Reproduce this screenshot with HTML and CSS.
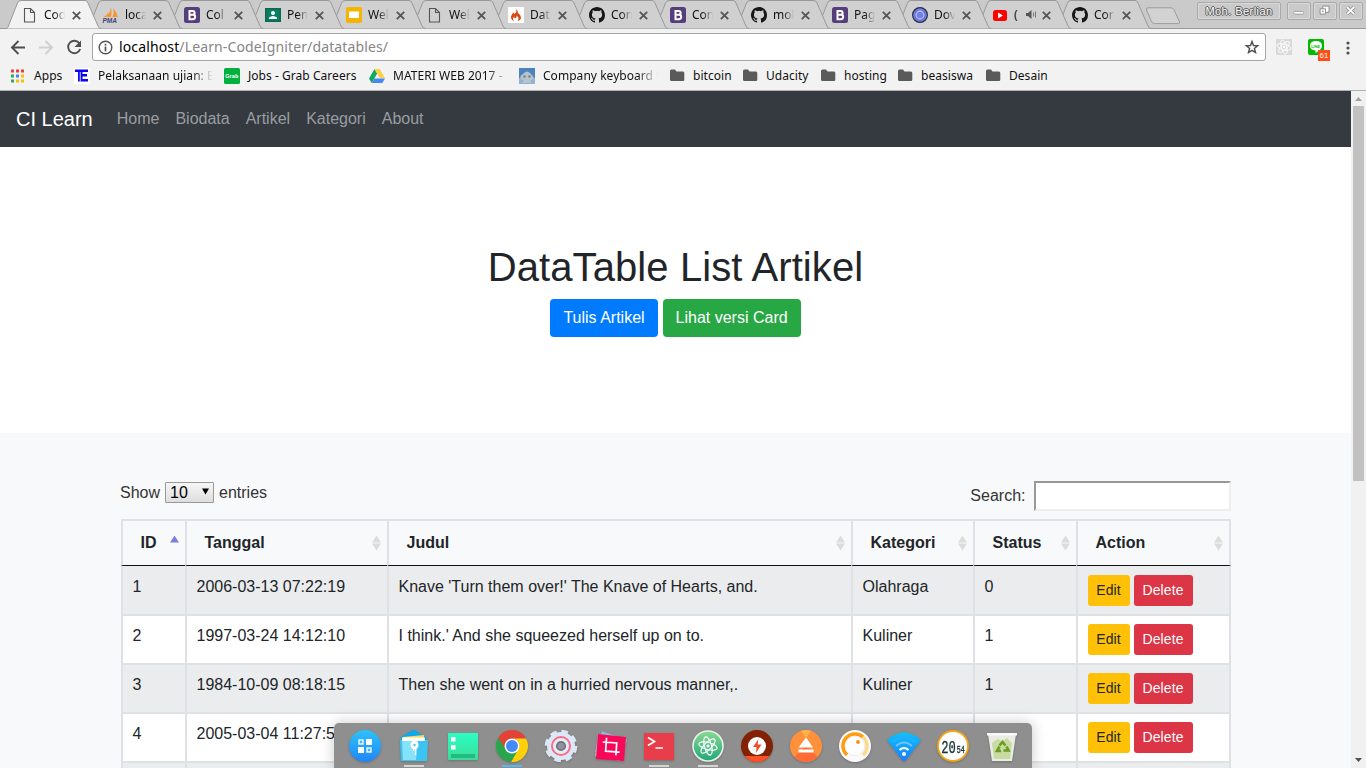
FILE: index.html
```html
<!DOCTYPE html>
<html lang="id">
<head>
<meta charset="utf-8">
<title>CodeIgniter DataTables</title>
<link rel="stylesheet" href="styles.css">
</head>
<body>
<svg class="defs" width="0" height="0">
  <symbol id="shape" viewBox="0 0 97 29"><path d="M0 29C2 29 2.500 28 3 27L12.500 3Q13.500.5 16 .5H80Q82 .5 83 3L93 26Q94 28.500 96 28.500V29Z"/></symbol>
  <symbol id="doc" viewBox="0 0 16 16"><path d="M2.500 1.500h6l4 4v9.500h-10zM8.500 1.500v4h4" fill="none" stroke="#555" stroke-width="1.100"/></symbol>
  <symbol id="boot" viewBox="0 0 16 16"><rect width="16" height="16" rx="2.500" fill="#563d7c"/><path d="M5.500 3.900h3.200a1.900 1.900 0 0 1 0 3.900H5.500zM5.500 7.800h3.500a2.200 2.200 0 0 1 0 4.400H5.500z" fill="none" stroke="#fff" stroke-width="2"/></symbol>
  <symbol id="git" viewBox="0 0 16 16"><path fill="#161616" d="M8 0C3.580 0 0 3.580 0 8c0 3.540 2.290 6.530 5.470 7.590.4.070.55-.17.55-.38 0-.19-.01-.82-.01-1.490-2.010.37-2.530-.49-2.690-.94-.09-.23-.48-.94-.82-1.130-.28-.15-.68-.52-.01-.53.63-.01 1.080.58 1.230.82.72 1.210 1.870.87 2.330.66.070-.52.28-.87.51-1.070-1.780-.2-3.640-.89-3.640-3.950 0-.87.31-1.590.82-2.150-.08-.2-.36-1.020.08-2.120 0 0 .67-.21 2.200.82a7.600 7.600 0 0 1 4 0c1.530-1.040 2.200-.82 2.200-.82.44 1.100.16 1.920.08 2.120.51.56.82 1.270.82 2.150 0 3.070-1.870 3.750-3.650 3.950.29.25.54.73.54 1.480 0 1.070-.01 1.930-.01 2.200 0 .21.15.46.55.38A8.010 8.010 0 0 0 16 8c0-4.420-3.580-8-8-8z"/></symbol>
  <symbol id="x" viewBox="0 0 9 9"><path d="M.8.8l7.400 7.400M8.200.8L.8 8.200" fill="none" stroke="#555" stroke-width="1.800"/></symbol>
  <symbol id="folder" viewBox="0 0 15 13"><path fill="#5a5a5a" d="M0 2Q0 .5 1.500.5H5L6.500 2.500H13Q14.300 2.500 14.300 4V10.700Q14.300 12 13 12H1.500Q0 12 0 10.700z"/></symbol>
  <symbol id="atom" viewBox="0 0 20 20"><g fill="none" stroke="currentColor" stroke-width="1.100"><ellipse cx="10" cy="10" rx="9" ry="3.400" transform="rotate(15 10 10)"/><ellipse cx="10" cy="10" rx="9" ry="3.400" transform="rotate(75 10 10)"/><ellipse cx="10" cy="10" rx="9" ry="3.400" transform="rotate(135 10 10)"/></g><circle cx="10" cy="10" r="1.500" fill="currentColor"/></symbol>
</svg>

<div class="browser">
<header class="tabs">
  <div class="tab active"><svg class="bg"><use href="#shape"/></svg><svg class="fav"><use href="#doc"/></svg><span>Cod</span><svg class="close"><use href="#x"/></svg></div>
  <div class="tab"><svg class="bg"><use href="#shape"/></svg><svg class="fav" viewBox="0 0 16 16"><path d="M2 10Q7 8 8 0Q9 6 8 10zM9 10Q12 7 10 1Q14 5 15 10zM0 10Q4 9 5 5L6 10z" fill="#f6962d"/><text x="-.5" y="15.500" class="pma">PMA</text></svg><span>loca</span><svg class="close"><use href="#x"/></svg></div>
  <div class="tab"><svg class="bg"><use href="#shape"/></svg><svg class="fav"><use href="#boot"/></svg><span>Col</span><svg class="close"><use href="#x"/></svg></div>
  <div class="tab"><svg class="bg"><use href="#shape"/></svg><svg class="fav" viewBox="0 0 16 16"><path fill="#11664f" d="M0 1h16v14H0z"/><path fill="#087f62" d="M1.500 2.500h13v11h-13z"/><circle cx="8" cy="6" r="2" fill="#fff"/><path fill="#fff" d="M4 12V10.500Q8 7.500 12 10.500V12z"/></svg><span>Pen</span><svg class="close"><use href="#x"/></svg></div>
  <div class="tab"><svg class="bg"><use href="#shape"/></svg><svg class="fav" viewBox="0 0 16 16"><rect width="16" height="16" rx="2" fill="#f4b400"/><path fill="#fff" d="M3 4.500h10v6.500H3z"/></svg><span>Wel</span><svg class="close"><use href="#x"/></svg></div>
  <div class="tab"><svg class="bg"><use href="#shape"/></svg><svg class="fav"><use href="#doc"/></svg><span>Wel</span><svg class="close"><use href="#x"/></svg></div>
  <div class="tab"><svg class="bg"><use href="#shape"/></svg><svg class="fav" viewBox="0 0 16 16"><path fill="#fff" d="M0 0h16v16H0z"/><path fill="#dd4814" d="M8 2Q9 5 7 6.500Q6 7.500 5.500 5.500Q2.500 8.500 3 11Q3.500 13.500 6 14Q4 11.500 6 10Q6.500 11.500 8 11Q9 9.500 8.500 8.500Q11 10 10.500 12L9.500 14Q13 13 13 10.500Q13 8 10 6Q10 3.500 8 2z"/></svg><span>Dat</span><svg class="close"><use href="#x"/></svg></div>
  <div class="tab"><svg class="bg"><use href="#shape"/></svg><svg class="fav"><use href="#git"/></svg><span>Con</span><svg class="close"><use href="#x"/></svg></div>
  <div class="tab"><svg class="bg"><use href="#shape"/></svg><svg class="fav"><use href="#boot"/></svg><span>Con</span><svg class="close"><use href="#x"/></svg></div>
  <div class="tab"><svg class="bg"><use href="#shape"/></svg><svg class="fav"><use href="#git"/></svg><span>mol</span><svg class="close"><use href="#x"/></svg></div>
  <div class="tab short"><svg class="bg"><use href="#shape"/></svg><svg class="fav"><use href="#boot"/></svg><span>Pag</span><svg class="close"><use href="#x"/></svg></div>
  <div class="tab short"><svg class="bg"><use href="#shape"/></svg><svg class="fav" viewBox="0 0 16 16"><circle cx="8" cy="8" r="7.400" fill="#5562c9" stroke="#2c3040" stroke-width="1.200"/><circle cx="8" cy="8" r="4" fill="#7381e6" stroke="#b5c0ff" stroke-width="1.300"/><circle cx="8" cy="8" r="6" fill="none" stroke="#8390ea" stroke-width=".8"/></svg><span>Dov</span><svg class="close"><use href="#x"/></svg></div>
  <div class="tab short audio"><svg class="bg"><use href="#shape"/></svg><svg class="fav" viewBox="0 0 16 16"><rect x="1" y="3" width="14" height="11" rx="2.500" fill="#f00"/><path fill="#fff" d="M6 5.500l5 3-5 3z"/></svg><span>(</span><svg class="sound" viewBox="0 0 12 10"><path fill="#555" d="M0 3h2l3.500-3v9L2 6H0z"/><path d="M7.500 2.500v4M9.500 1.500v6" stroke="#777"/></svg><svg class="close"><use href="#x"/></svg></div>
  <div class="tab short"><svg class="bg"><use href="#shape"/></svg><svg class="fav"><use href="#git"/></svg><span>Cor</span><svg class="close"><use href="#x"/></svg></div>
  <svg class="newtab" viewBox="0 0 36 18"><path d="M3 .8h23q2 0 3 2l5.500 12q.5 1.800-1 1.800H9.500q-2 0-3-2L1.500 3Q1 .8 3 .8z" fill="#d2d2d2" stroke="#9b9b9b"/></svg>
  <div class="winbtns">
    <div class="user">Moh. Berlian</div>
    <svg class="wb" viewBox="0 0 24 18"><rect x="6" y="9.500" width="11" height="3" rx="1" fill="#fff" stroke="#999"/></svg>
    <svg class="wb" viewBox="0 0 24 18"><g fill="#fff" stroke="#858585"><path d="M9.500 3.500h7v7h-7z"/><path d="M6.500 6.500h6v6h-6z"/></g><path fill="#aaa" d="M8.500 8.500h2v2h-2z"/></svg>
    <svg class="wb" viewBox="0 0 24 18"><path d="M7.500 4.500l8 8M15.500 4.500l-8 8" stroke="#8c8c8c" stroke-width="3.800"/><path d="M7.500 4.500l8 8M15.500 4.500l-8 8" stroke="#fff" stroke-width="2"/></svg>
  </div>
</header>

<div class="toolbar">
  <svg class="navs" viewBox="0 0 92 33"><g fill="none" stroke="#4f4f4f" stroke-width="1.900"><path d="M25 18.500H12M18.500 12l-6.500 6.500 6.500 6.500"/><path stroke="#d0d0d0" d="M39 18.500h13M45.500 12l6.500 6.500-6.500 6.500"/><path d="M79.500 14.500A6.200 6.200 0 1 0 80.200 20"/></g><path fill="#4f4f4f" d="M81 11.500v6.500h-6.500z"/></svg>
  <div class="url">
    <svg class="info" viewBox="0 0 15 15"><circle cx="7.500" cy="7.500" r="6.300" fill="none" stroke="#555" stroke-width="1.400"/><path d="M7.500 6.600v4.600M7.500 3.700v1.700" stroke="#555" stroke-width="1.700"/></svg>
    <div class="address">localhost<i>/Learn-CodeIgniter/datatables/</i></div>
    <svg class="star" viewBox="0 0 16 16"><path d="M8 2.500l1.500 4 4.200.2-3.300 2.700 1.100 4.100L8 11.300l-3.500 2.200 1.100-4.100L2.300 6.700l4.200-.2z" fill="none" stroke="#4d4d4d" stroke-width="1.400"/></svg>
  </div>
  <div class="ext react"><svg viewBox="0 0 20 20"><use href="#atom"/></svg></div>
  <div class="ext line"><svg viewBox="0 0 16 16"><path fill="#fff" d="M8 2Q14 2 14 7Q14 10.500 7.500 14V11.500Q2 11 2 7Q2 2 8 2z"/><text x="3.300" y="8.500">LINE</text></svg><b>61</b></div>
  <svg class="menu" viewBox="0 0 4 14"><circle cx="2" cy="2" r="1.600"/><circle cx="2" cy="7" r="1.600"/><circle cx="2" cy="12" r="1.600"/></svg>
</div>

<nav class="bookmarks">
  <a class="w-apps"><svg viewBox="0 0 16 16"><path fill="#ea4335" d="M0 1.500h3v3H0zM5 1.500h3v3H5zM10 1.500h3v3h-3z"/><path fill="#34a853" d="M0 6.500h3v3H0zM0 11.500h3v3H0z"/><path fill="#4285f4" d="M5 6.500h3v3H5z"/><path fill="#fbbc05" d="M10 6.500h3v3h-3zM5 11.500h3v3H5zM10 11.500h3v3h-3z"/></svg><span>Apps</span></a>
  <a class="w-te fade"><svg viewBox="0 0 16 16"><path fill="#fff" d="M0 0h16v16H0z"/><path fill="#0a05f5" d="M1 1.500h13V4H8.500v2H13v2.500H8.500v2.500H14v2.500H4V4H1z"/><path fill="#fff" d="M5.800 4h.8v9.500h-.8z"/></svg><span>Pelaksanaan ujian: B</span></a>
  <a class="w-grab"><svg viewBox="0 0 16 16"><rect width="16" height="16" rx="1.500" fill="#00b140"/><text class="grab" x="1.300" y="10">Grab</text></svg><span>Jobs - Grab Careers</span></a>
  <a class="w-drive fade"><svg viewBox="0 0 16 16"><path fill="#11a861" d="M5.500 1L0 10.500l2.700 4.500L8.200 5.500z"/><path fill="#ffcf48" d="M5.500 1h5.200L16 10.300h-5.200z"/><path fill="#4687f4" d="M5.300 10.500H16L13.300 15H2.700z"/></svg><span>MATERI WEB 2017 -</span></a>
  <a class="w-comp fade"><svg viewBox="0 0 16 16"><path fill="#4a83bd" d="M0 0h16v16H0z"/><path fill="#8fb2d5" d="M0 10h16v6H0z"/><path fill="#b9c3cc" d="M5 5Q8 2 11 5L14.500 9V11L11 12.500 13 15H3l2-2.500L1.500 11V8z"/><circle cx="5.500" cy="8.500" r="1.200" fill="#6e8497"/><circle cx="10.500" cy="8.500" r="1.200" fill="#6e8497"/></svg><span>Company keyboard t</span></a>
  <a class="w-bit dir"><svg><use href="#folder"/></svg><span>bitcoin</span></a>
  <a class="w-uda dir"><svg><use href="#folder"/></svg><span>Udacity</span></a>
  <a class="w-host dir"><svg><use href="#folder"/></svg><span>hosting</span></a>
  <a class="w-bea dir"><svg><use href="#folder"/></svg><span>beasiswa</span></a>
  <a class="dir"><svg><use href="#folder"/></svg><span>Desain</span></a>
</nav>

<div class="viewport">
  <main class="page">
    <nav class="navbar"><a class="brand">CI Learn</a><a>Home</a><a>Biodata</a><a>Artikel</a><a>Kategori</a><a>About</a></nav>
    <section class="hero"><h1>DataTable List Artikel</h1><div class="actions"><a class="btn blue">Tulis Artikel</a><a class="btn green">Lihat versi Card</a></div></section>
    <section class="list">
      <div class="controls">
        <div class="length">Show <span class="select">10<svg viewBox="0 0 7 7"><path d="M0 .5h7L3.500 6.500z"/></svg></span> entries</div>
        <label class="search">Search:<input type="text"></label>
      </div>
      <table>
        <colgroup><col class="c1"><col class="c2"><col class="c3"><col class="c4"><col class="c5"><col class="c6"></colgroup>
        <thead><tr>
          <th class="asc"><div>ID</div></th><th class="sort"><div>Tanggal</div></th><th class="sort"><div>Judul</div></th><th class="sort"><div>Kategori</div></th><th class="sort"><div>Status</div></th><th class="sort"><div>Action</div></th>
        </tr></thead>
        <tbody>
          <tr><td>1</td><td>2006-03-13 07:22:19</td><td>Knave 'Turn them over!' The Knave of Hearts, and.</td><td>Olahraga</td><td>0</td><td><div class="ops"><a class="edit">Edit</a><a class="delete">Delete</a></div></td></tr>
          <tr><td>2</td><td>1997-03-24 14:12:10</td><td>I think.' And she squeezed herself up on to.</td><td>Kuliner</td><td>1</td><td><div class="ops"><a class="edit">Edit</a><a class="delete">Delete</a></div></td></tr>
          <tr><td>3</td><td>1984-10-09 08:18:15</td><td>Then she went on in a hurried nervous manner,.</td><td>Kuliner</td><td>1</td><td><div class="ops"><a class="edit">Edit</a><a class="delete">Delete</a></div></td></tr>
          <tr><td>4</td><td>2005-03-04 11:27:5</td><td></td><td></td><td></td><td><div class="ops"><a class="edit">Edit</a><a class="delete">Delete</a></div></td></tr>
          <tr><td></td><td></td><td></td><td></td><td></td><td></td></tr>
        </tbody>
      </table>
    </section>
  </main>
  <aside class="scroll"><svg viewBox="0 0 15 15"><path fill="#a0a0a0" d="M4 10h7L7.500 6z"/></svg><div class="thumb"></div><svg class="down" viewBox="0 0 15 15"><path fill="#505050" d="M4 5h7L7.500 9z"/></svg></aside>
</div>
</div>

<div class="dock">
  <div class="app"><svg viewBox="0 0 34 34"><defs><linearGradient id="g1" x2="0" y2="1"><stop stop-color="#2cc3fb"/><stop offset="1" stop-color="#2185f8"/></linearGradient></defs><circle cx="17" cy="17" r="16" fill="url(#g1)"/><path fill="#fff" d="M18 10h6v6h-6zM10 18h6v6h-6z"/><path d="M11 11h4v4h-4zM19 19h4v4h-4z" fill="#4ab2ff" stroke="#e6f5ff" stroke-width="1.500"/></svg></div>
  <div class="app run"><svg viewBox="0 0 34 34"><path fill="#08a9ed" d="M4 8L15 1.500q1.500-.8 3 0L29 8v24H4z"/><path fill="#ffd75a" d="M6 8l21-2v9H6z"/><path fill="#fff" d="M6 9h22v5H6z"/><path fill="#3cc4f3" d="M3 11h28l-1 21H4z"/><path fill="#fff" d="M5 8.500h23V12H5z"/><path fill="#84e2fa" d="M5 12h16l-2 19H6z"/><circle cx="17.500" cy="16" r="4" fill="#fff"/><circle cx="17.500" cy="16" r="1.300" fill="#63c5ea"/><path d="M16.500 18v4M18.500 18v8" stroke="#fff" stroke-width="1.300"/></svg></div>
  <div class="app"><svg viewBox="0 0 34 34"><defs><linearGradient id="g2" x2="0" y2="1"><stop stop-color="#2affc3"/><stop offset="1" stop-color="#3ddc98"/></linearGradient></defs><rect x="2" y="4" width="30" height="27" rx="1" fill="url(#g2)"/><path fill="#fff" d="M5 8h4.500v4.500H5zM5 16h4.500v4.500H5z"/><path fill="#24bb81" d="M5 25h24v4H5z"/></svg></div>
  <div class="app run here"><svg viewBox="0 0 34 34"><path fill="#e44234" d="M3.100 9A16 16 0 0 1 31 9.500L17 10A7 7 0 0 0 10.500 20.500z"/><path fill="#fdd008" d="M31 9.500A16 16 0 0 1 16 33L23 20.500A7 7 0 0 0 17 9.500z"/><path fill="#29a64d" d="M3.100 9L11 20.500A7 7 0 0 0 23 20.500L16 33A16 16 0 0 1 3.100 9z"/><circle cx="17" cy="17" r="7.500" fill="#fff"/><circle cx="17" cy="17" r="6" fill="#428af7"/></svg></div>
  <div class="app"><svg viewBox="0 0 34 34"><circle cx="17" cy="17" r="14.300" fill="none" stroke="#dbe6f6" stroke-width="4" stroke-dasharray="6.500 4.731"/><circle cx="17" cy="17" r="11.500" fill="none" stroke="#dce8f7" stroke-width="5"/><circle cx="17" cy="17" r="9" fill="#e3ecf7" stroke="#fa6d83" stroke-width="2"/><circle cx="17" cy="17" r="4.200" fill="#929292" stroke="#6d7484" stroke-width="1.800"/></svg></div>
  <div class="app"><svg viewBox="0 0 34 34"><path fill="#91b7dd" d="M9 2l25 9-8 21L2 23z"/><path fill="#c9a7cb" d="M5 5l28 4-6 23L2 27z"/><path fill="#f9085a" d="M5 5l28 3-2 24L3 30z"/><path d="M9.500 13.500H23.500v12.500M13 9v13.500h14" stroke="#fff" stroke-width="1.700" fill="none" transform="rotate(4 17 17)"/></svg></div>
  <div class="app run"><svg viewBox="0 0 34 34"><rect x="2" y="4" width="30" height="27" rx=".8" fill="#e83d4a"/><path d="M6 8.500l6.500 4L6 16.500M13.500 19H21" fill="none" stroke="#fff" stroke-width="1.700"/></svg></div>
  <div class="app run atom"><svg viewBox="0 0 34 34"><defs><linearGradient id="g3" x2="0" y2="1"><stop stop-color="#8bd992"/><stop offset="1" stop-color="#20a878"/></linearGradient></defs><circle cx="17" cy="17" r="15" fill="url(#g3)" stroke="#e9f3ec" stroke-width="1.600"/><use href="#atom" x="6.500" y="6.500" width="21" height="21"/></svg></div>
  <div class="app"><svg viewBox="0 0 34 34"><circle cx="17" cy="17" r="16" fill="#842003"/><path fill="#fb5125" d="M4.500 27h25A16 16 0 0 1 4.500 27z"/><circle cx="17" cy="17" r="9" fill="#fff"/><path fill="#f04b2d" d="M18.500 10l-5.500 8h3.500l-.5 6 5.500-8.500h-4z"/></svg></div>
  <div class="app"><svg viewBox="0 0 34 34"><circle cx="17" cy="17" r="16" fill="#ff913b"/><path fill="#ffb24b" d="M12 1.800Q17 0 22 1.800L17 9z"/><path fill="#ff6a35" d="M5.500 28L17 16l11.500 12A16 16 0 0 1 5.500 28z"/><path fill="#fff" d="M9.500 18.500h14.500L17 8.500zM9.500 20.500h15v3h-15z"/></svg></div>
  <div class="app"><svg viewBox="0 0 34 34"><circle cx="17" cy="17" r="16" fill="#fafafa"/><path d="M9 26A12 12 0 1 1 25 8" fill="none" stroke="#ff9d0d" stroke-width="3.500"/><path d="M25 8A12 12 0 0 1 25 26" fill="none" stroke="#ffd987" stroke-width="3.500"/><circle cx="17" cy="17" r="9.800" fill="#fff" stroke="#eee"/><circle cx="20" cy="13" r="1.900" fill="#f88c1b"/></svg></div>
  <div class="app"><svg viewBox="0 0 34 34"><defs><linearGradient id="g4" x2="0" y2="1"><stop stop-color="#0bc3fc"/><stop offset="1" stop-color="#197fff"/></linearGradient></defs><path d="M0 11Q17-4 34 11L19 31q-2 2-4 0z" fill="url(#g4)"/><g fill="none" stroke-width="2"><path d="M6 13Q17 4 28 13" stroke="#2fabfc"/><path d="M9 17Q17 10 25 17" stroke="#6fc4fd"/><path d="M12.500 21Q17 17 21.500 21" stroke="#fff"/></g><circle cx="17" cy="25" r="2" fill="#fff"/></svg></div>
  <div class="app"><svg viewBox="0 0 34 34"><circle cx="17" cy="17" r="15" fill="#fff" stroke="#f5a614" stroke-width="1.800"/><g transform="translate(5.200 23.800) scale(.64 1)"><text class="clock">20<tspan class="small" dx="1.500">54</tspan></text></g></svg></div>
  <div class="app"><svg viewBox="0 0 34 34"><path fill="#e9ece5" d="M3 5h28l-4 27H7z"/><path fill="#c8dba0" d="M7 14l6-4 4 2 5-3 5 5-2 16H9z"/><path fill="#f9faf8" d="M2 4h30v2.500H2z"/><path d="M14.500 16.500l3-3.500 3 3.500M21.500 17.500l2 4h-5M16 22h-4l2.500-4.500" fill="none" stroke="#699c20" stroke-width="2.600"/></svg></div>
</div>
</body>
</html>
```

FILE: styles.css
```css
* { box-sizing: border-box; }
body { margin: 0; width: 1366px; height: 768px; overflow: hidden; font: 16px/24px "Liberation Sans", Arial, sans-serif; color: #212529; background: #f2f2f2; }
svg { display: block; flex: none; }
.defs { position: absolute; }
.browser { display: flex; flex-direction: column; height: 768px; }

/* Window title bar and tabs */
.tabs { display: flex; height: 29px; padding-left: 5px; background: #cacaca; border-bottom: 1px solid #999; flex: none; font: 12px/18px "Noto Sans", sans-serif; color: #111; position: relative; }
.tab { position: relative; width: 81px; height: 29px; flex: none; display: flex; align-items: center; padding: 0 0 0 17px; isolation: isolate; }
.tab.short { width: 80px; }
.tab .bg { position: absolute; left: 0; top: 0; width: 97px; height: 29px; z-index: -1; fill: #d0d0d0; stroke: #999; }
.tab.active .bg { fill: #f2f2f2; }
.tab:nth-child(1) { z-index: 20; }
.tab:nth-child(2) { z-index: 19; }
.tab:nth-child(3) { z-index: 18; }
.tab:nth-child(4) { z-index: 17; }
.tab:nth-child(5) { z-index: 16; }
.tab:nth-child(6) { z-index: 15; }
.tab:nth-child(7) { z-index: 14; }
.tab:nth-child(8) { z-index: 13; }
.tab:nth-child(9) { z-index: 12; }
.tab:nth-child(10) { z-index: 11; }
.tab:nth-child(11) { z-index: 10; }
.tab:nth-child(12) { z-index: 9; }
.tab:nth-child(13) { z-index: 8; }
.tab:nth-child(14) { z-index: 7; }
.fav { width: 16px; height: 16px; margin-top: 1px; overflow: visible; }
.tab span { width: 21px; margin-left: 6px; white-space: nowrap; -webkit-mask-image: linear-gradient(90deg, #000 50%, transparent); mask-image: linear-gradient(90deg, #000 50%, transparent); }
.close { width: 9px; height: 9px; margin-left: 7px; margin-top: 1px; }
.audio span { width: 5px; -webkit-mask-image: none; mask-image: none; }
.sound { width: 12px; height: 10px; margin-left: 7px; }
.audio .close { margin-left: 4px; }
.pma { font: italic bold 6.5px "Liberation Sans", sans-serif; fill: #414478; }
.newtab { width: 36px; height: 18px; margin: 7px 0 0 10px; }
.winbtns { display: flex; gap: 2px; margin: 2px 3px 0 auto; }
.user { width: 84px; height: 18px; border: 1px solid #aaa; border-radius: 2px; margin-right: 4px; font: 11px/16px "Liberation Sans", sans-serif; text-align: center; letter-spacing: .45px; color: #fff; text-shadow: 1px 0 #555, -1px 0 #555, 0 1px #555, 0 -1px #555; box-shadow: inset 0 0 0 1px #d9d9d9; }
.wb { width: 24px; height: 18px; border: 1px solid #aaa; border-radius: 2px; box-shadow: inset 0 0 0 1px #d9d9d9; }

/* Address bar */
.toolbar { height: 33px; display: flex; align-items: flex-start; flex: none; }
.navs { width: 92px; height: 33px; }
.url { width: 1174px; height: 28px; margin-top: 4px; border: 1px solid #a6a6a6; border-radius: 3px; background: #fff; display: flex; align-items: center; padding: 0 5px 0 5px; }
.info { width: 15px; height: 15px; }
.address { flex: 1; margin-left: 6px; font: 14px/22px "Noto Sans", sans-serif; letter-spacing: .13px; color: #000; }
.address i { font-style: normal; color: #858585; }
.star { width: 16px; height: 16px; }
.ext { width: 16px; height: 16px; margin-top: 10px; position: relative; }
.ext svg { width: 16px; height: 16px; }
.react { margin-left: 10px; background: #d9d9d9; color: #fff; }
.line { margin-left: 16px; background: #00b900; border-radius: 2px; }
.line text { font: bold 3.8px "Liberation Sans", sans-serif; fill: #00b900; }
.line b { position: absolute; left: 10px; top: 11px; width: 12px; height: 11px; background: #ff4d14; color: #fff; font: 8px/11px "Liberation Sans", sans-serif; text-align: center; }
.menu { width: 4px; height: 14px; margin: 12px 0 0 22px; fill: #505050; }

/* Bookmarks */
.bookmarks { height: 29px; flex: none; display: flex; padding: 0 0 1px 11px; border-bottom: 1px solid #b0b0b0; font: 12px/18px "Noto Sans", sans-serif; color: #111; }
.bookmarks a { display: flex; align-items: center; white-space: nowrap; letter-spacing: .04px; }
.bookmarks svg { width: 16px; height: 16px; margin-right: 8px; }
.bookmarks .w-apps svg { margin-right: 7px; }
.bookmarks .dir svg { width: 15px; height: 13px; margin-right: 8px; }
.fade span { width: 115px; -webkit-mask-image: linear-gradient(90deg, #000 82%, transparent); mask-image: linear-gradient(90deg, #000 82%, transparent); }
.w-apps { width: 63px; }
.w-te { width: 150px; }
.w-grab { width: 145px; }
.w-drive { width: 150px; }
.w-comp { width: 151px; }
.w-bit { width: 73px; }
.w-uda { width: 78px; }
.w-host { width: 77px; }
.w-bea { width: 88px; }
.grab { font: bold 5.5px "Liberation Sans", sans-serif; fill: #fff; }

/* Page */
.viewport { flex: 1; min-height: 0; display: flex; overflow: hidden; }
.page { width: 1351px; background: #fff; overflow: hidden; }
.navbar { height: 56px; background: #343a40; display: flex; align-items: center; padding: 0 16px; gap: 16px; color: #9a9da0; }
.navbar .brand { font-size: 20px; line-height: 30px; color: #fff; margin-right: 8px; }
.hero { padding: 96px 0; text-align: center; height: 286px; }
h1 { margin: 0 0 8px; font-size: 40px; line-height: 48px; font-weight: 400; letter-spacing: .09px; }
.actions { display: flex; justify-content: center; gap: 5px; }
.btn { height: 38px; padding: 7px 13px; border-radius: 4px; color: #fff; }
.blue { background: #007bff; }
.green { background: #28a745; }
.list { background: #f8f9fb; padding: 48px 120px 0 121px; height: 400px; }
.controls { display: flex; justify-content: space-between; height: 38px; color: #333; }
.length { display: flex; height: 24px; gap: 5px; margin-left: -1px; }
.select { display: flex; align-items: center; justify-content: space-between; width: 49px; height: 21px; margin-top: 1px; padding: 0 4px; border: 1px solid #999; border-radius: 1px; background: linear-gradient(#f6f6f6, #dedede); color: #000; }
.select svg { width: 7px; height: 7px; margin-bottom: 2px; }
.search { display: flex; height: 30px; line-height: 29px; gap: 8.500px; }
.search input { width: 197px; height: 30px; border: 2px solid; border-color: #999 #eee #eee #999; border-radius: 0; background: #fff; padding: 0; }
table { width: 1110px; table-layout: fixed; border-collapse: separate; border-spacing: 0; }
.c1 { width: 64px; }
.c2 { width: 202px; }
.c3 { width: 464px; }
.c4 { width: 122px; }
.c5 { width: 103px; }
.c6 { width: 155px; }
th { height: 47px; border-top: 2px solid #dee2e6; border-left: 2px solid #dee2e6; border-bottom: 1px solid #111; padding: 0 6px 0 17.500px; text-align: left; }
th div { display: flex; align-items: center; justify-content: space-between; }
th div::after { content: ""; width: 9px; height: 15px; background: #dcdcdc; clip-path: polygon(50% 0, 100% 46%, 100% 54%, 50% 100%, 0 54%, 0 46%, 100% 46%, 100% 54%, 0 54%, 0 46%); }
th.sort div::after { clip-path: polygon(50% 0, 100% 7px, 0 7px, 0 8px, 100% 8px, 50% 100%, 0 8px, 0 7px); }
th.asc div::after { background: #7b80dc; clip-path: polygon(50% 0, 100% 7px, 0 7px); }
td { height: 49px; border-left: 2px solid #dee2e6; border-bottom: 2px solid #dee2e6; padding: 8px 10px 0 9.500px; vertical-align: top; background: #fff; white-space: nowrap; }
th:last-child, td:last-child { border-right: 2px solid #dee2e6; }
tbody tr:nth-child(odd) td { background: #ebeced; }
tbody tr:first-child td { height: 50px; padding-top: 9px; }
.ops { display: flex; gap: 4px; font-size: 14px; line-height: 31px; text-align: center; }
.ops a { height: 31px; border-radius: 3px; letter-spacing: .1px; }
.edit { width: 42px; background: #ffc107; }
.delete { width: 59px; background: #dc3545; color: #fff; }
.scroll { width: 15px; background: #f1f1f1; display: flex; flex-direction: column; }
.scroll svg { width: 15px; height: 15px; }
.thumb { width: 11px; height: 375px; margin-left: 2px; background: #c1c1c1; }
.scroll .down { margin-top: auto; }

/* Dock */
.dock { position: absolute; z-index: 50; left: 334px; top: 723px; width: 698px; height: 45px; display: flex; padding: 6px 6px 0; background: #8f8f8f; border-radius: 5px 5px 0 0; box-shadow: 0 0 14px rgba(0, 0, 0, .22); }
.app { width: 49px; height: 39px; display: flex; flex-direction: column; align-items: center; flex: none; }
.app svg { width: 34px; height: 34px; filter: drop-shadow(0 1px 1px rgba(0, 0, 0, .2)); }
.run::after { content: ""; width: 20px; height: 2px; margin-top: 2px; background: #d5d5d5; }
.here::after { background: #58b7ed; }
.atom { color: #fff; }
.clock { font: 19px "Liberation Mono", monospace; fill: #173638; stroke: #173638; stroke-width: .4px; }
.small { font-size: 10.5px; }
```
